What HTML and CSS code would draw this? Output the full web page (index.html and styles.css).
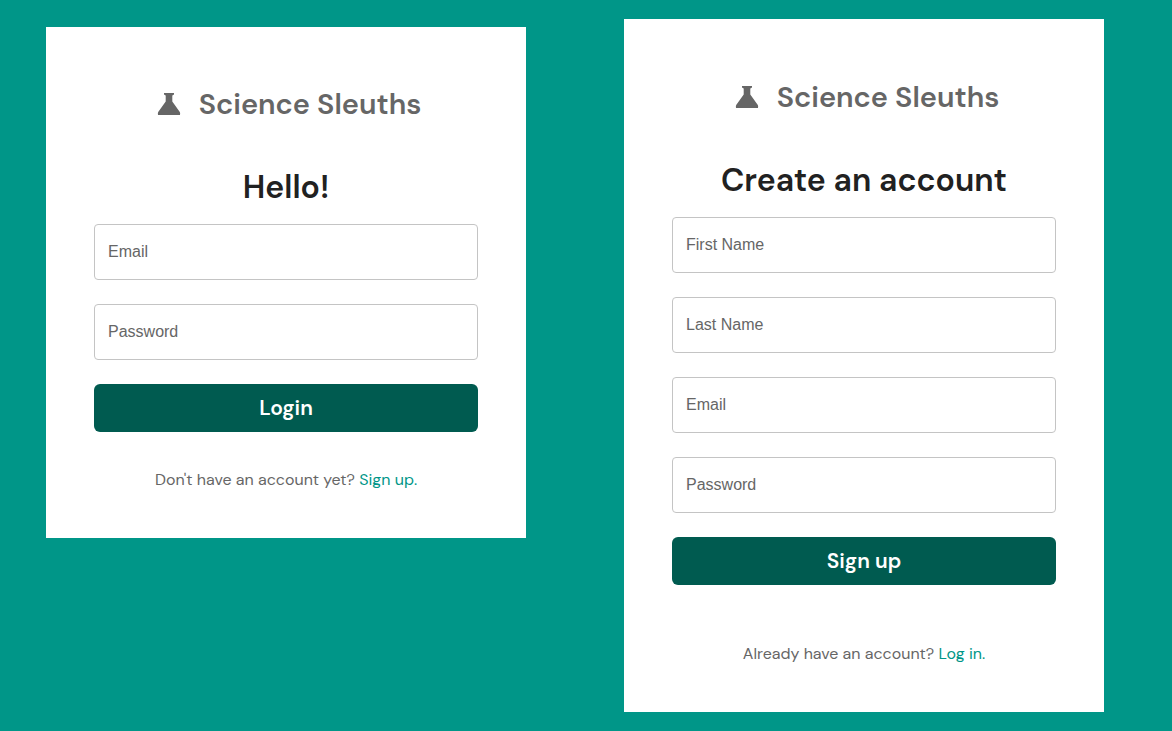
FILE: index.html
```html
<!DOCTYPE html>
<html lang="en">
<head>
<meta charset="utf-8">
<meta name="viewport" content="width=device-width, initial-scale=1">
<title>Science Sleuths</title>
<link rel="stylesheet" href="styles.css">
</head>
<body>
<main class="page">
  <section class="card login" id="login">
    <div class="brand">
      <svg class="flask" viewBox="0 0 24 24" aria-hidden="true"><path d="M7 1h10v1.500l-1.700 1v6l7.500 10.500q.6 1 .2 3H1q-.4-2 .2-3L8.700 9.500v-6L7 2.500z"/></svg>
      <span class="brand-name">Science Sleuths</span>
    </div>
    <h1 class="title">Hello!</h1>
    <form class="form">
      <input class="field" type="email" placeholder="Email" aria-label="Email">
      <input class="field" type="password" placeholder="Password" aria-label="Password">
      <button class="submit" type="button">Login</button>
    </form>
    <p class="switch">Don't have an account yet? <a class="link" href="#signup">Sign up.</a></p>
  </section>
  <section class="card signup" id="signup">
    <div class="brand">
      <svg class="flask" viewBox="0 0 24 24" aria-hidden="true"><path d="M7 1h10v1.500l-1.700 1v6l7.500 10.500q.6 1 .2 3H1q-.4-2 .2-3L8.700 9.500v-6L7 2.500z"/></svg>
      <span class="brand-name">Science Sleuths</span>
    </div>
    <h1 class="title">Create an account</h1>
    <form class="form">
      <input class="field" type="text" placeholder="First Name" aria-label="First Name">
      <input class="field" type="text" placeholder="Last Name" aria-label="Last Name">
      <input class="field" type="email" placeholder="Email" aria-label="Email">
      <input class="field" type="password" placeholder="Password" aria-label="Password">
      <button class="submit" type="button">Sign up</button>
    </form>
    <p class="switch">Already have an account? <a class="link" href="#login">Log in.</a></p>
  </section>
</main>
</body>
</html>
```
FILE: styles.css
```css
* { box-sizing: border-box; }
body {
  margin: 0;
  min-height: 100vh;
  background: #009688;
  font-family: "DM Sans", "Open Sans", sans-serif;
  color: #666;
}
.page {
  display: grid;
  grid-template-columns: repeat(2, minmax(0, 480px));
  gap: 98px;
  align-items: start;
  padding: 19px 68px 19px 46px;
}
.card {
  display: flex;
  flex-direction: column;
  background: #fff;
  padding: 56px 48px 46px;
}
.login { margin-top: 8px; }
.signup { padding-top: 57px; }
.brand {
  display: flex;
  align-items: center;
  justify-content: center;
  gap: 18px;
  height: 42px;
  padding-left: 6px;
}
.flask { width: 24px; height: 24px; fill: #666; }
.brand-name { font: 600 29px/40px "DM Sans", Lato, sans-serif; }
.title {
  margin: 41px 0 15px;
  color: #212121;
  text-align: center;
  font: 600 32px/43px "DM Sans", "Open Sans", sans-serif;
}
.form { display: flex; flex-direction: column; gap: 24px; }
.field {
  width: 100%;
  height: 56px;
  padding: 0 13px;
  border: 1px solid #c4c4c4;
  border-radius: 4px;
  background: #fff;
  color: #212121;
  font: 16px "Liberation Sans", Arial, sans-serif;
}
.field::placeholder { color: #666; opacity: 1; }
.submit {
  height: 48px;
  padding: 0;
  border: 0;
  border-radius: 6px;
  background: #005b50;
  color: #fff;
  font: 600 21px/24px "DM Sans", "Open Sans", sans-serif;
}
.switch { margin: 36px 0 0; text-align: center; font-size: 16px; line-height: 24px; }
.signup .switch { margin-top: 57px; }
.link { color: #009688; text-decoration: none; }
```
